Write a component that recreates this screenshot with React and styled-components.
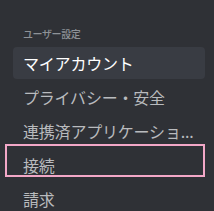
import styled, { createGlobalStyle } from "styled-components";

const GlobalStyle = createGlobalStyle`
  html, body {
    margin: 0;
    padding: 0;
    background: #2f3136;
  }
`;

const Sidebar = styled.nav`
  width: 214px;
  height: 211px;
  overflow: hidden;
  background: #2f3136;
  padding: 26px 9px 0 13px;
  box-sizing: border-box;
  font-family: "Noto Sans CJK JP", "Noto Sans", sans-serif;
`;

const Header = styled.div`
  padding: 0 10px;
  height: 17px;
  line-height: 15px;
  font-size: 10px;
  font-weight: 500;
  letter-spacing: -0.4px;
  color: #8e9297;
`;

const List = styled.div`
  display: flex;
  flex-direction: column;
  gap: 2px;
  margin-top: 4px;
`;

const Item = styled.div`
  position: relative;
  height: 32px;
  padding: 0 4px 0 10px;
  border-radius: 4px;
  display: flex;
  align-items: center;
  font-size: 16px;
  color: ${(p) => (p.$selected ? "#ffffff" : "#b9bbbe")};
  background: ${(p) => (p.$selected ? "#393c43" : "transparent")};

  &::after {
    content: "";
    display: ${(p) => (p.$highlight ? "block" : "none")};
    position: absolute;
    top: -5px;
    bottom: 4px;
    left: -8px;
    right: 0;
    border: 2px solid #f2a7c7;
    pointer-events: none;
  }
`;

const Label = styled.span`
  white-space: nowrap;
  letter-spacing: -0.2px;
`;

const items = [
  { label: "マイアカウント", selected: true },
  { label: "プライバシー・安全" },
  { label: "連携済アプリケーショ..." },
  { label: "接続", highlight: true },
  { label: "請求" },
];

const App = () => {
  return (
    <>
      <GlobalStyle />
      <Sidebar>
        <Header>ユーザー設定</Header>
        <List>
          {items.map((it) => (
            <Item key={it.label} $selected={it.selected} $highlight={it.highlight}>
              <Label>{it.label}</Label>
            </Item>
          ))}
        </List>
      </Sidebar>
    </>
  );
};

export default App;
